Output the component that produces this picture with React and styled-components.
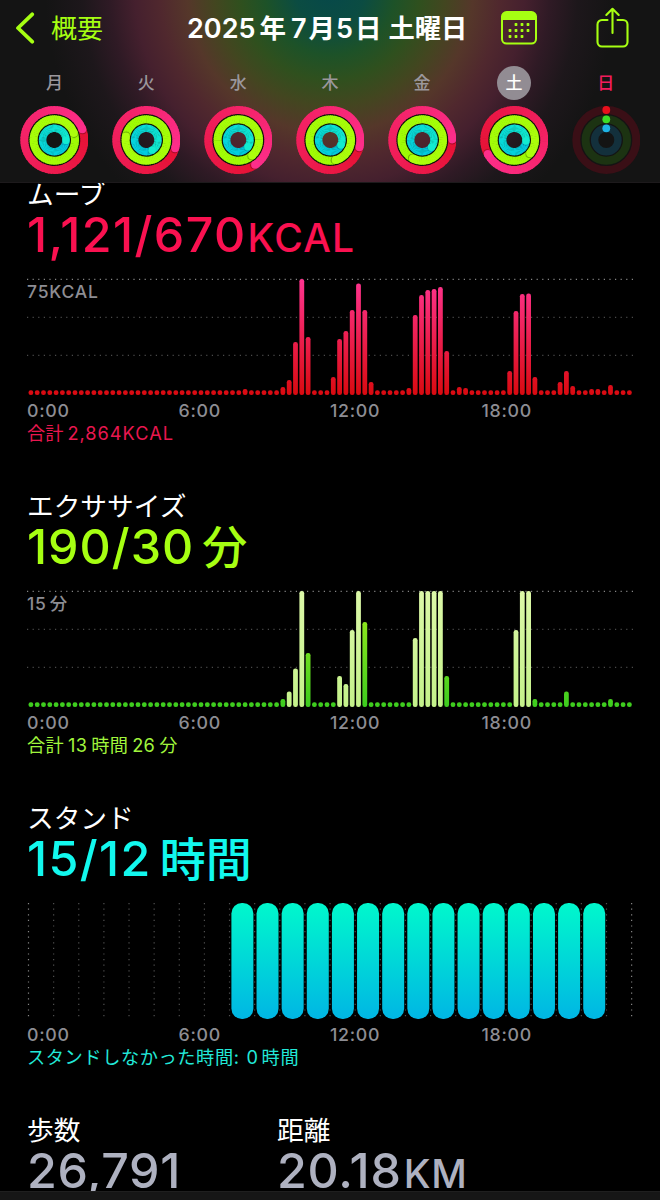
import React from "react";
import styled, { createGlobalStyle } from "styled-components";

const GlobalStyle = createGlobalStyle`
  * { box-sizing: border-box; }
  html, body { margin: 0; padding: 0; background: #000; }
  body { font-family: Inter, "Noto Sans CJK JP", sans-serif; }
`;

const Screen = styled.div`
  width: 660px;
  height: 1200px;
  background: #000;
  color: #fff;
  overflow: hidden;
  display: flex;
  flex-direction: column;
`;

const Header = styled.header`
  position: relative;
  z-index: 1;
  flex: none;
  height: 183px;
  background:
    radial-gradient(circle at 330px -10px,
      #06484a 0, #0b4c42 35px, #1d5228 65px, #2f501e 90px, #434620 116px,
      #55372a 143px, #50282e 170px, #45202e 195px, #2f1a25 220px, #1d171b 248px, rgba(20, 20, 20, 0) 285px),
    #141414;
  border-bottom: 1px solid #1d1a1c;
`;

const NavBar = styled.nav`
  display: flex;
  align-items: center;
  height: 56px;
  padding: 0 31px 0 15px;
`;

const Back = styled.div`
  display: flex;
  align-items: center;
  gap: 16px;
  width: 172px;
  color: #a6ff12;
  font-size: 26px;
  line-height: 36px;

  span { padding-top: 2px; }
`;

const Title = styled.h1`
  display: flex;
  align-items: baseline;
  width: 314px;
  margin: 0;
  font-size: 27px;
  line-height: 36px;
  font-weight: 600;
  white-space: nowrap;
`;

const Run = styled.span`
  margin-left: ${(p) => p.$gap || 0}px;
  letter-spacing: ${(p) => (p.$ls === undefined ? "inherit" : p.$ls + "px")};
  font-size: ${(p) => (p.$size ? p.$size + "px" : "inherit")};
`;

const Actions = styled.div`
  flex: 1;
  display: flex;
  align-items: center;
  justify-content: space-between;
`;

const Week = styled.div`
  display: grid;
  grid-template-columns: repeat(7, 91.9px);
  padding-left: 8.5px;
  padding-top: 10px;
`;

const Day = styled.div`
  display: flex;
  flex-direction: column;
  align-items: center;
  gap: 6px;
`;

const DayName = styled.span`
  width: 34px;
  height: 34px;
  border-radius: 50%;
  text-align: center;
  font-size: 17px;
  line-height: 35px;
  font-weight: 500;
  color: ${(p) => (p.$selected ? "#fff" : p.$holiday ? "#f21c5c" : "#9b979c")};
  background: ${(p) => (p.$selected ? "#928c93" : "transparent")};
`;

const Content = styled.main`
  flex: 1;
  min-height: 0;
  margin-top: -6px;
  padding-left: 27px;
  overflow: hidden;
`;

const Section = styled.section`
  height: 312px;
  display: flex;
  flex-direction: column;
`;

const SectionTitle = styled.h2`
  margin: 0;
  height: 32px;
  font-size: 26.7px;
  line-height: 34px;
  font-weight: 400;
  white-space: nowrap;
`;

const Value = styled.div`
  display: flex;
  align-items: baseline;
  height: 52px;
  line-height: 52px;
  font-size: 48.4px;
  font-weight: 500;
  white-space: nowrap;
  color: ${(p) => p.$color};
`;

const ChartWrap = styled.div`
  display: grid;
  margin-top: 17px;
  height: 118px;

  > * { grid-area: 1 / 1; }
`;

const ScaleLabel = styled.span`
  padding-top: 3px;
  font-size: 17.5px;
  line-height: 21px;
  font-weight: 500;
  letter-spacing: 0.8px;
  color: #8d8d93;
`;

const Axis = styled.div`
  display: grid;
  grid-template-columns: repeat(4, 151.5px);
  height: 23px;
  margin-top: 3px;
  font-size: 17.8px;
  line-height: 24px;
  font-weight: 500;
  letter-spacing: 0.7px;
  color: #8d8d93;
`;

const Total = styled.div`
  height: 24px;
  font-size: 18.2px;
  line-height: 23px;
  letter-spacing: ${(p) => p.$ls}px;
  white-space: nowrap;
  color: ${(p) => p.$color};
`;

const Stats = styled.div`
  display: grid;
  grid-template-columns: 250px 1fr;
`;

const TabBar = styled.footer`
  position: relative;
  flex: none;
  height: 9px;
  background: #161616;
  border-top: 1px solid #1f1f1f;
`;

const RING_KINDS = [
  { r: 30, w: 8, from: [230, 18, 52], to: [253, 46, 138], dim: "#3a0f16", dot: "#e8101c", shade: 0.28 },
  { r: 20.7, w: 8, from: [158, 252, 4], to: [172, 255, 12], dim: "#1c3312", dot: "#3ddc28", shade: 0.3 },
  { r: 11.7, w: 7.4, from: [0, 200, 226], to: [18, 236, 208], dim: "#13303c", dot: "#1fb4e6", shade: 0.14 },
];

const point = (r, deg) => {
  const a = ((deg - 90) * Math.PI) / 180;
  return [r * Math.cos(a), r * Math.sin(a)];
};

function FullRing({ kind, head }) {
  const { r, w, from, to, shade } = kind;
  const n = 72;
  const step = 360 / n;
  const [cx, cy] = point(r, head);
  const [sx, sy] = point(r, head + 70 / r);
  return (
    <g>
      {Array.from({ length: n }, (_, i) => {
        const a = head + i * step;
        const [x1, y1] = point(r, a);
        const [x2, y2] = point(r, a + step + (i < n - 1 ? 1.5 : 0));
        const t = i / (n - 1);
        const c = from.map((v, k) => Math.round(v + (to[k] - v) * t));
        return (
          <path
            key={i}
            d={`M${x1} ${y1}A${r} ${r} 0 0 1 ${x2} ${y2}`}
            stroke={`rgb(${c.join(",")})`}
            strokeWidth={w}
            fill="none"
          />
        );
      })}
      <circle cx={sx} cy={sy} r={w / 2 - 0.2} fill="#000" opacity={shade} />
      <circle cx={cx} cy={cy} r={w / 2} fill={`rgb(${to.join(",")})`} />
    </g>
  );
}

function Rings({ heads }) {
  return (
    <svg width="68" height="68" viewBox="-34.3 -34 68 68">
      {heads && <circle r="20.5" fill="none" stroke="#10160a" strokeWidth="24" />}
      {RING_KINDS.map((kind, i) =>
        heads ? (
          <FullRing key={i} kind={kind} head={heads[i]} />
        ) : (
          <g key={i}>
            <circle r={kind.r} fill="none" stroke={kind.dim} strokeWidth={kind.w} />
            <circle cy={-kind.r} r="3.9" fill={kind.dot} />
          </g>
        )
      )}
    </svg>
  );
}

const DAYS = [
  { name: "月", heads: [69, 70, 92] },
  { name: "火", heads: [106, 280, 150] },
  { name: "水", heads: [146, 138, 125] },
  { name: "木", heads: [104, 165, 115] },
  { name: "金", heads: [89, 207, 128] },
  { name: "土", heads: [242, 130, 95], selected: true },
  { name: "日", holiday: true },
];

const MOVE = {
  34: 6, 40: 8, 41: 15, 42: 53, 43: 116, 44: 58, 48: 18, 49: 56, 50: 64, 51: 85, 52: 111.5, 53: 85, 54: 13,
  60: 7, 61: 80, 62: 100, 63: 105, 64: 106, 65: 108, 66: 44, 68: 8, 69: 7, 76: 24, 77: 84, 78: 101, 79: 101.5,
  80: 18, 84: 13, 85: 24, 86: 9, 89: 6, 90: 6, 92: 10,
};

const EXERCISE = {
  40: 8, 41: 15.5, 42: 38.5, 43: 116, 44: 54, 49: 31, 50: 23, 51: 77, 52: 116, 53: 85, 61: 69, 62: 116, 63: 116,
  64: 116, 65: 116, 66: 31, 77: 77, 78: 116, 79: 116, 80: 8, 85: 15.5, 92: 8,
};
const INTENSE = [41, 42, 43, 49, 50, 51, 52, 61, 62, 63, 64, 65, 77, 78, 79];

function BarChart({ id, data, top, bottom, intense = [] }) {
  return (
    <svg width="608" height="118" viewBox="0 0 608 118">
      <defs>
        <linearGradient id={id} gradientUnits="userSpaceOnUse" x1="0" y1="1" x2="0" y2="117">
          <stop offset="0" stopColor={top} />
          <stop offset="1" stopColor={bottom} />
        </linearGradient>
        <linearGradient id={id + "-hi"} gradientUnits="userSpaceOnUse" x1="0" y1="1" x2="0" y2="117">
          <stop offset="0" stopColor="#dcf8a8" />
          <stop offset="1" stopColor="#c4f28a" />
        </linearGradient>
      </defs>
      {[1.3, 39.3, 77.3].map((y, i) => (
        <line key={y} x1="0" x2="606" y1={y} y2={y} stroke={i ? "#4a4a4a" : "#858585"} strokeWidth="1.2" strokeDasharray="1.2 4.4" />
      ))}
      {Array.from({ length: 96 }, (_, i) => {
        const h = data[i] || 4.8;
        return (
          <rect
            key={i}
            x={1.5 + i * 6.3}
            y={117 - h}
            width="4.8"
            height={h}
            rx="2.2"
            fill={`url(#${intense.includes(i) ? id + "-hi" : id})`}
          />
        );
      })}
    </svg>
  );
}

function StandChart() {
  return (
    <svg width="608" height="118" viewBox="0 0 608 118">
      <defs>
        <linearGradient id="stand" x1="0" y1="0" x2="0" y2="1">
          <stop offset="0" stopColor="#00f8cc" />
          <stop offset="1" stopColor="#00b6e4" />
        </linearGradient>
      </defs>
      {Array.from({ length: 25 }, (_, i) => (
        <line
          key={i}
          x1={1.5 + i * 25.13}
          x2={1.5 + i * 25.13}
          y1="1"
          y2="116"
          stroke={i % 24 ? "#505050" : "#858585"}
          strokeWidth="1.2"
          strokeDasharray="1.2 4.4"
        />
      ))}
      {Array.from({ length: 15 }, (_, i) => (
        <rect key={i} x={204.4 + i * 25.13} y="1" width="22" height="116" rx="10.5" fill="url(#stand)" />
      ))}
    </svg>
  );
}

function TimeAxis() {
  return (
    <Axis>
      <span>0:00</span>
      <span>6:00</span>
      <span>12:00</span>
      <span>18:00</span>
    </Axis>
  );
}

function CalendarIcon() {
  const dots = [
    [15, 13.5], [21, 13.5], [27, 13.5],
    [9, 19.5], [15, 19.5], [21, 19.5], [27, 19.5],
    [9, 25.5], [15, 25.5], [21, 25.5],
  ];
  return (
    <svg width="36" height="34" viewBox="0 0 36 34">
      <rect x="1" y="1" width="34" height="31.6" rx="4.6" fill="none" stroke="#a6ff12" strokeWidth="2" />
      <path d="M1 9V5.5A4.5 4.5 0 0 1 5.5 1h25A4.5 4.5 0 0 1 35 5.5V9z" fill="#a6ff12" />
      {dots.map(([x, y]) => (
        <rect key={x + "-" + y} x={x - 1.4} y={y - 1.4} width="2.8" height="2.8" rx="0.6" fill="#a6ff12" />
      ))}
    </svg>
  );
}

function ShareIcon() {
  return (
    <svg width="33" height="42" viewBox="0 0 33 42" fill="none" stroke="#a6ff12" strokeWidth="2.1" strokeLinecap="round" strokeLinejoin="round">
      <path d="M11.5 13H6A4.5 4.5 0 0 0 1.5 17.5V35A4.5 4.5 0 0 0 6 39.5h21a4.5 4.5 0 0 0 4.5-4.5V17.5A4.5 4.5 0 0 0 27 13h-5.5" />
      <path d="M16.5 26V2M10.3 8l6.2-6.2L22.7 8" />
    </svg>
  );
}

export default function App() {
  return (
    <Screen>
      <GlobalStyle />
      <Header>
        <NavBar>
          <Back>
            <svg width="20" height="32" viewBox="0 0 20 32" fill="none" stroke="#a6ff12" strokeWidth="3.8" strokeLinecap="round" strokeLinejoin="round">
              <path d="M17.2 2.3L3 16l14.2 13.7" />
            </svg>
            <span>概要</span>
          </Back>
          <Title>
            <Run>2025</Run>
            <Run $gap={4} $size={26.5}>年</Run>
            <Run $gap={5}>7</Run>
            <Run $gap={2} $size={26.5}>月</Run>
            <Run $gap={1}>5</Run>
            <Run $gap={2} $size={26.5}>日</Run>
            <Run $gap={7} $size={26.3}>土曜日</Run>
          </Title>
          <Actions>
            <CalendarIcon />
            <ShareIcon />
          </Actions>
        </NavBar>
        <Week>
          {DAYS.map((d) => (
            <Day key={d.name}>
              <DayName $selected={d.selected} $holiday={d.holiday}>{d.name}</DayName>
              <Rings heads={d.heads} />
            </Day>
          ))}
        </Week>
      </Header>

      <Content>
        <Section>
          <SectionTitle>ムーブ</SectionTitle>
          <Value $color="#fa1150">
            <Run $ls={1.4}>1,121/670</Run>
            <Run $size={39} $ls={1.2} $gap={1}>KCAL</Run>
          </Value>
          <ChartWrap>
            <BarChart id="move" data={MOVE} top="#ff3490" bottom="#d90a10" />
            <ScaleLabel>75KCAL</ScaleLabel>
          </ChartWrap>
          <TimeAxis />
          <Total $color="#e8174f" $ls={0}>
            <Run>合計</Run>
            <Run $gap={4} $ls={1}>2,864KCAL</Run>
          </Total>
        </Section>

        <Section>
          <SectionTitle>エクササイズ</SectionTitle>
          <Value $color="#a6ff12">
            <Run $ls={1}>190/30</Run>
            <Run $size={45} $gap={8}>分</Run>
          </Value>
          <ChartWrap>
            <BarChart id="exercise" data={EXERCISE} intense={INTENSE} top="#a8f01c" bottom="#3ccc1e" />
            <ScaleLabel>
              <Run>15</Run>
              <Run $gap={3}>分</Run>
            </ScaleLabel>
          </ChartWrap>
          <TimeAxis />
          <Total $color="#a0f53c" $ls={0.3}>
            <Run>合計</Run>
            <Run $gap={4}>13</Run>
            <Run $gap={4}>時間</Run>
            <Run $gap={4}>26</Run>
            <Run $gap={4}>分</Run>
          </Total>
        </Section>

        <Section>
          <SectionTitle>スタンド</SectionTitle>
          <Value $color="#12f8ee">
            <Run $ls={1.4}>15/12</Run>
            <Run $size={46} $gap={8}>時間</Run>
          </Value>
          <ChartWrap>
            <StandChart />
          </ChartWrap>
          <TimeAxis />
          <Total $color="#22e8d8" $ls={0.6}>
            <Run>スタンドしなかった時間:</Run>
            <Run $gap={7}>0</Run>
            <Run $gap={3}>時間</Run>
          </Total>
        </Section>

        <Stats>
          <div>
            <SectionTitle>歩数</SectionTitle>
            <Value $color="#aeb1c0">
              <Run $ls={0.6}>26,791</Run>
            </Value>
          </div>
          <div>
            <SectionTitle>距離</SectionTitle>
            <Value $color="#aeb1c0">
              <Run $ls={0.8}>20.18</Run>
              <Run $size={39} $ls={0.8} $gap={2}>KM</Run>
            </Value>
          </div>
        </Stats>
      </Content>
      <TabBar />
    </Screen>
  );
}
